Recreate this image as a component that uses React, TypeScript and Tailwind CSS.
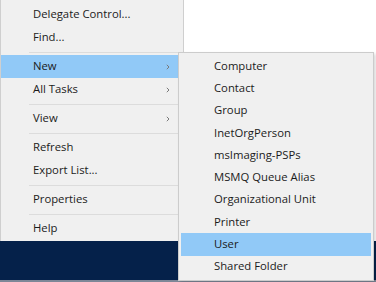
import React from "react";

type MenuEntry = { label: string; sub?: boolean; active?: boolean } | "sep";

const mainMenu: MenuEntry[] = [
  { label: "Delegate Control..." },
  { label: "Find..." },
  "sep",
  { label: "New", sub: true, active: true },
  { label: "All Tasks", sub: true },
  "sep",
  { label: "View", sub: true },
  "sep",
  { label: "Refresh" },
  { label: "Export List..." },
  "sep",
  { label: "Properties" },
  "sep",
  { label: "Help" },
];

const newMenu = [
  "Computer",
  "Contact",
  "Group",
  "InetOrgPerson",
  "msImaging-PSPs",
  "MSMQ Queue Alias",
  "Organizational Unit",
  "Printer",
  "User",
  "Shared Folder",
];

const Chevron = () => (
  <svg width="4" height="6" viewBox="0 0 4 6" className="mr-[13px]">
    <path d="M0.8 0.8 L3 3 L0.8 5.2" fill="none" stroke="#7a7a7a" strokeWidth="1" />
  </svg>
);

const App: React.FC = () => {
  return (
    <div
      className="relative w-[376px] h-[282px] bg-white overflow-hidden flex flex-col text-[11.3px] text-[#1b1b1b]"
      style={{ fontFamily: '"Open Sans", "Noto Sans", sans-serif' }}
    >
      <div className="flex-1 flex">
        <div className="w-[184px] bg-[#f0f0f0] border-l border-r border-[#cfcfcf] pt-[3px] flex flex-col">
          {mainMenu.map((item, i) =>
            item === "sep" ? (
              <div key={i} className="h-[6px] flex items-center pl-[28px]">
                <div className="w-full h-px bg-[#dcdcdc]" />
              </div>
            ) : (
              <div
                key={i}
                className={`h-[23px] flex items-center justify-between pl-[32px] ${
                  item.active ? "bg-[#91c9f7]" : ""
                }`}
              >
                <span>{item.label}</span>
                {item.sub && <Chevron />}
              </div>
            )
          )}
        </div>
      </div>
      <div className="h-[41px] bg-[#05214a] border-b-2 border-[#7d8797]" />

      {/* cascaded "New" submenu */}
      <div className="absolute left-[178px] top-[52px] w-[196px] bg-[#f0f0f0] border border-[#cccccc] shadow-[2px_2px_3px_rgba(0,0,0,0.15)] pt-[2px] pb-[2px] px-[2px]">
        {newMenu.map((label) => (
          <div
            key={label}
            className={`h-[22.3px] flex items-center pl-[33px] ${
              label === "User" ? "bg-[#91c9f7]" : ""
            }`}
          >
            {label}
          </div>
        ))}
      </div>
    </div>
  );
};

export default App;
